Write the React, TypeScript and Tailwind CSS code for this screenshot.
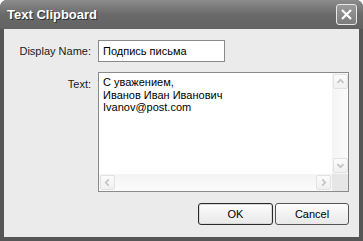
import React from "react";

const font = { fontFamily: '"Liberation Sans", Arial, sans-serif' };

function Chevron({ dir }: { dir: "up" | "down" | "left" | "right" }) {
  const paths: Record<string, string> = {
    up: "M4 9 L7.5 5.5 L11 9",
    down: "M4 6 L7.5 9.5 L11 6",
    left: "M9 4 L5.5 7.5 L9 11",
    right: "M6 4 L9.5 7.5 L6 11",
  };
  return (
    <svg width="15" height="15" viewBox="0 0 15 15">
      <path d={paths[dir]} fill="none" stroke="#c4c4c4" strokeWidth="2" />
    </svg>
  );
}

function ScrollBtn({ dir }: { dir: "up" | "down" | "left" | "right" }) {
  return (
    <div className="w-[15px] h-[15px] flex items-center justify-center border border-[#e2e2e2] rounded-[2px] bg-gradient-to-b from-[#fbfbfb] to-[#f0f0f0]">
      <Chevron dir={dir} />
    </div>
  );
}

export default function App() {
  return (
    <div
      className="w-[363px] h-[241px] flex flex-col bg-[#565656] rounded-t-[7px] overflow-hidden"
      style={font}
    >
      {/* Title bar */}
      <div className="h-[29px] flex items-center justify-between pl-[7px] pr-[6px] bg-gradient-to-b from-[#8c8c8c] via-[#6a6a6a] to-[#626262]">
        <span
          className="text-white font-bold text-[13px] leading-none"
          style={{ textShadow: "1px 1px 0 #2e2e2e" }}
        >
          Text Clipboard
        </span>
        <div className="w-[21px] h-[21px] rounded-[3px] border border-[#e8e8e8] bg-gradient-to-b from-[#9a9a9a] to-[#7c7c7c] flex items-center justify-center">
          <svg width="13" height="13" viewBox="0 0 13 13">
            <path d="M2 2 L11 11 M11 2 L2 11" stroke="#ffffff" strokeWidth="2.2" />
          </svg>
        </div>
      </div>

      {/* Body */}
      <div className="flex-1 mx-[4px] mb-[4px] bg-[#ebebeb] flex flex-col pt-[11px] pr-[10px] text-[11px] text-black">
        <div className="flex items-center">
          <div className="w-[94px] text-right pr-[7px] text-[#1a1a1a]">Display Name:</div>
          <div className="w-[127px] h-[22px] bg-white border border-[#8a8a8a] flex items-center pl-[4px]">
            Подпись письма
          </div>
        </div>

        <div className="flex mt-[10px]">
          <div className="w-[94px] text-right pr-[7px] pt-[4px] text-[#1a1a1a]">Text:</div>
          <div className="w-[251px] h-[120px] bg-white border border-[#8a8a8a] flex flex-col">
            <div className="flex flex-1">
              <div className="flex-1 pl-[4px] pt-[3px] leading-[12.5px]">
                <div>С уважением,</div>
                <div>Иванов Иван Иванович</div>
                <div>Ivanov@post.com</div>
              </div>
              <div className="w-[16px] flex flex-col justify-between bg-gradient-to-r from-[#f4f4f4] to-[#fbfbfb] pt-[1px] pb-[1px] pl-[1px]">
                <ScrollBtn dir="up" />
                <ScrollBtn dir="down" />
              </div>
            </div>
            <div className="h-[17px] flex">
              <div className="flex-1 flex justify-between items-center bg-gradient-to-b from-[#f4f4f4] to-[#fbfbfb] px-[1px]">
                <ScrollBtn dir="left" />
                <ScrollBtn dir="right" />
              </div>
              <div className="w-[16px] bg-[#e6e6e6]" />
            </div>
          </div>
        </div>

        <div className="flex justify-end gap-[2px] mt-[11px]">
          <button className="w-[75px] h-[22px] rounded-[3px] border border-[#2a2a2a] bg-gradient-to-b from-[#fdfdfd] to-[#e8e8e8] text-[11px] shadow-[inset_0_0_0_1px_#d8d8d8]">
            OK
          </button>
          <button className="w-[74px] h-[22px] rounded-[3px] border border-[#555555] bg-gradient-to-b from-[#fdfdfd] to-[#e8e8e8] text-[11px]">
            Cancel
          </button>
        </div>
      </div>
    </div>
  );
}
